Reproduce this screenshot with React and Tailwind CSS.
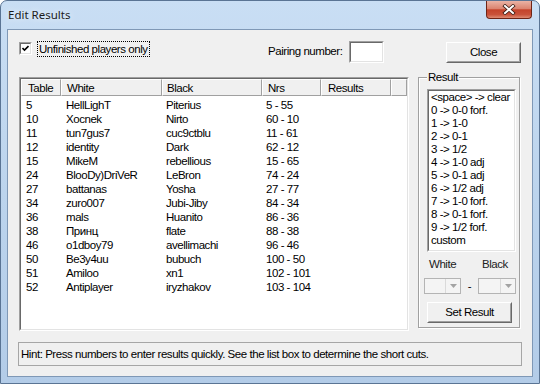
import React from "react";

const rows = [
  ["5", "HellLighT", "Piterius", "5 - 55"],
  ["10", "Xocnek", "Nirto", "60 - 10"],
  ["11", "tun7gus7", "cuc9ctblu", "11 - 61"],
  ["12", "identity", "Dark", "62 - 12"],
  ["15", "MikeM", "rebellious", "15 - 65"],
  ["24", "BlooDy)DriVeR", "LeBron", "74 - 24"],
  ["27", "battanas", "Yosha", "27 - 77"],
  ["34", "zuro007", "Jubi-Jiby", "84 - 34"],
  ["36", "mals", "Huanito", "86 - 36"],
  ["38", "Принц", "flate", "88 - 38"],
  ["46", "o1dboy79", "avellimachi", "96 - 46"],
  ["50", "Be3y4uu", "bubuch", "100 - 50"],
  ["51", "Amiloo", "xn1", "102 - 101"],
  ["52", "Antiplayer", "iryzhakov", "103 - 104"],
];

const shortcuts = [
  "<space> -> clear",
  "0 -> 0-0 forf.",
  "1 -> 1-0",
  "2 -> 0-1",
  "3 -> 1/2",
  "4 -> 1-0 adj",
  "5 -> 0-1 adj",
  "6 -> 1/2 adj",
  "7 -> 1-0 forf.",
  "8 -> 0-1 forf.",
  "9 -> 1/2 forf.",
  "custom",
];

// classic raised push button
const PushButton = ({ label, className }) => (
  <div
    className={
      "border border-t-white border-l-white border-b-[#696969] border-r-[#696969] " + className
    }
  >
    <div className="w-full h-full border border-t-[#f0f0f0] border-l-[#f0f0f0] border-b-[#a0a0a0] border-r-[#a0a0a0] bg-[#f0f0f0] flex items-center justify-center">
      {label}
    </div>
  </div>
);

const Combo = ({ className }) => (
  <div className={"border border-[#b4b4b4] bg-[#f4f4f4] flex justify-end " + className}>
    <div className="w-[15px] h-full border-l border-[#dadada] flex items-center justify-center">
      <svg width="7" height="4" viewBox="0 0 7 4">
        <path d="M0 0 L7 0 L3.5 4 Z" fill="#a3a3a3" />
      </svg>
    </div>
  </div>
);

const HeaderCell = ({ children, className }) => (
  <div
    className={
      "h-full border-r border-r-[#a0a0a0] border-b border-b-[#a0a0a0] border-l border-l-white border-t border-t-white flex items-center " +
      className
    }
  >
    {children}
  </div>
);

export default function App() {
  return (
    <div className="w-[540px] h-[384px] relative overflow-hidden rounded-t-[7px] border border-[#5a7494] bg-gradient-to-b from-[#c9def4] via-[#bcd4ed] to-[#b3cce8] flex flex-col font-['Liberation_Sans',Arial,sans-serif] text-[11.5px] tracking-[-0.45px] text-black whitespace-nowrap">
      {/* title bar */}
      <div className="h-[28px] flex items-start shrink-0">
        <div className="h-[28px] pl-[7px] flex items-center font-['Noto_Sans',sans-serif] text-[11.5px] tracking-normal text-[#1b1b1b] [text-shadow:0_0_6px_rgba(255,255,255,0.95)]">
          Edit Results
        </div>
        <div className="ml-auto mr-[7px] w-[46px] h-[18px] rounded-b-[4px] border border-t-0 border-[#6e2416] bg-[linear-gradient(#eab3a5_0%,#db8470_45%,#c4432b_52%,#c9523a_80%,#de8a72_100%)] flex items-center justify-center">
          <svg width="14" height="11" viewBox="0 0 14 11">
            <path d="M3 2 L11 9 M11 2 L3 9" stroke="#3a1a12" strokeWidth="3.6" strokeLinecap="square" />
            <path d="M3 2 L11 9 M11 2 L3 9" stroke="#ffffff" strokeWidth="2" strokeLinecap="square" />
          </svg>
        </div>
      </div>

      {/* client area */}
      <div className="mx-[6px] mb-[6px] flex-1 border border-[#7f98b6] bg-[#f0f0f0] pl-[11px] pt-[11px] flex flex-col">
        {/* top row */}
        <div className="h-[22px] flex items-start">
          <div className="w-[249px] flex items-start">
            <div className="mt-[1px] w-[13px] h-[13px] border border-t-[#a0a0a0] border-l-[#a0a0a0] border-b-white border-r-white">
              <div className="w-full h-full border border-t-[#696969] border-l-[#696969] border-b-[#e3e3e3] border-r-[#e3e3e3] bg-white flex items-center justify-center">
                <svg width="7" height="7" viewBox="0 0 7 7">
                  <path d="M0.5 3 L2.5 5 L6.5 1" stroke="#000" strokeWidth="1.6" fill="none" />
                </svg>
              </div>
            </div>
            <div className="ml-[5px] h-[16px] px-[1px] border border-dotted border-black flex items-center leading-[14px]">
              Unfinished players only
            </div>
          </div>
          <div className="w-[81px] h-[22px] flex items-center">Pairing number:</div>
          <div className="w-[35px] h-[22px] border border-t-[#a0a0a0] border-l-[#a0a0a0] border-b-white border-r-white">
            <div className="w-full h-full border border-t-[#696969] border-l-[#696969] border-b-[#e3e3e3] border-r-[#e3e3e3] bg-white" />
          </div>
          <PushButton label="Close" className="ml-[62px] mt-[1px] w-[75px] h-[21px]" />
        </div>

        {/* list and result group */}
        <div className="mt-[14px] flex items-start">
          <div className="w-[390px] h-[254px] border border-t-[#a0a0a0] border-l-[#a0a0a0] border-b-white border-r-white">
            <div className="w-full h-full border border-t-[#696969] border-l-[#696969] border-b-[#e3e3e3] border-r-[#e3e3e3] bg-white flex flex-col">
              <div className="h-[17px] flex bg-[#f0f0f0] leading-[14px]">
                <HeaderCell className="w-[40px] pl-[6px]">Table</HeaderCell>
                <HeaderCell className="w-[101px] pl-[5px]">White</HeaderCell>
                <HeaderCell className="w-[100px] pl-[4px]">Black</HeaderCell>
                <HeaderCell className="w-[59px] pl-[5px]">Nrs</HeaderCell>
                <HeaderCell className="w-[70px] pl-[6px]">Results</HeaderCell>
                <HeaderCell className="flex-1" />
              </div>
              <div className="mt-[2px] flex flex-col">
                {rows.map((r) => (
                  <div key={r[0]} className="h-[14px] flex items-center leading-[14px]">
                    <div className="w-[40px] pl-[5px]">{r[0]}</div>
                    <div className="w-[101px] pl-[5px]">{r[1]}</div>
                    <div className="w-[100px] pl-[4px]">{r[2]}</div>
                    <div className="w-[59px] pl-[4px]">{r[3]}</div>
                  </div>
                ))}
              </div>
            </div>
          </div>

          <div className="relative ml-[9px] w-[102px] h-[251px] border border-[#a0a0a0] shadow-[inset_1px_1px_0_#ffffff,1px_1px_0_#ffffff]">
            <div className="absolute -top-[8px] left-[8px] px-[1px] bg-[#f0f0f0] leading-[14px]">Result</div>
            <div className="mt-[11px] ml-[8px] w-[89px] h-[163px] border border-t-[#a0a0a0] border-l-[#a0a0a0] border-b-white border-r-white">
              <div className="w-full h-full border border-t-[#696969] border-l-[#696969] border-b-[#e3e3e3] border-r-[#e3e3e3] bg-white pl-[2px] flex flex-col">
                {shortcuts.map((s) => (
                  <div key={s} className="h-[13px] leading-[13px]">
                    {s}
                  </div>
                ))}
              </div>
            </div>
            <div className="mt-[5px] h-[14px] flex items-center leading-[14px] text-[#222]">
              <div className="ml-[10px] w-[53px]">White</div>
              <div>Black</div>
            </div>
            <div className="mt-[7px] ml-[5px] flex items-center">
              <Combo className="w-[37px] h-[16px]" />
              <div className="w-[17px] text-center leading-[14px]">-</div>
              <Combo className="w-[38px] h-[16px]" />
            </div>
            <PushButton label="Set Result" className="mt-[8px] ml-[8px] w-[85px] h-[21px]" />
          </div>
        </div>

        {/* hint */}
        <div className="mt-[11px] -ml-px w-[504px] h-[24px] border border-[#a6a6a6] flex items-center pl-[2px] leading-[14px]">
          Hint: Press numbers to enter results quickly. See the list box to determine the short cuts.
        </div>
      </div>
    </div>
  );
}
